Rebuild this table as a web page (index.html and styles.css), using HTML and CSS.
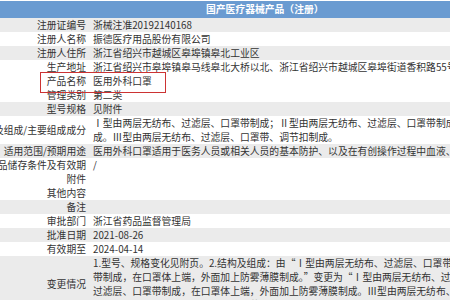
FILE: index.html
```html
<!DOCTYPE html>
<html lang="zh-CN">
<head>
<meta charset="utf-8">
<title>国产医疗器械产品（注册）</title>
<link rel="stylesheet" href="styles.css">
</head>
<body>
<div class="sheet">
  <div class="head">国产医疗器械产品（注册）</div>
  <div class="row gray"><div class="lab"><span>注册证编号</span></div><div class="val">浙械注准20192140168</div></div>
  <div class="row"><div class="lab"><span>注册人名称</span></div><div class="val">振德医疗用品股份有限公司</div></div>
  <div class="row gray"><div class="lab"><span>注册人住所</span></div><div class="val">浙江省绍兴市越城区皋埠镇皋北工业区</div></div>
  <div class="row"><div class="lab"><span>生产地址</span></div><div class="val">浙江省绍兴市皋埠镇皋马线皋北大桥以北、浙江省绍兴市越城区皋埠街道香积路55号</div></div>
  <div class="row"><div class="lab"><span>产品名称</span></div><div class="val">医用外科口罩</div></div>
  <div class="row"><div class="lab"><span>管理类别</span></div><div class="val">第二类</div></div>
  <div class="row gray"><div class="lab"><span>型号规格</span></div><div class="val">见附件</div></div>
  <div class="row"><div class="lab"><span>结构及组成/主要组成成分</span></div><div class="val">Ⅰ型由两层无纺布、过滤层、口罩带制成；Ⅱ型由两层无纺布、过滤层、口罩带制成，在口罩体上端，外面加上防雾薄膜制<br>成。Ⅲ型由两层无纺布、过滤层、口罩带、调节扣制成。</div></div>
  <div class="row gray"><div class="lab"><span>适用范围/预期用途</span></div><div class="val">医用外科口罩适用于医务人员或相关人员的基本防护、以及在有创操作过程中血液、体液和飞溅物传播的防护。</div></div>
  <div class="row"><div class="lab"><span>产品储存条件及有效期</span></div><div class="val">/</div></div>
  <div class="row"><div class="lab"><span>附件</span></div><div class="val"></div></div>
  <div class="row"><div class="lab"><span>其他内容</span></div><div class="val"></div></div>
  <div class="row gray"><div class="lab"><span>备注</span></div><div class="val"></div></div>
  <div class="row"><div class="lab"><span>审批部门</span></div><div class="val">浙江省药品监督管理局</div></div>
  <div class="row gray"><div class="lab"><span>批准日期</span></div><div class="val">2021-08-26</div></div>
  <div class="row"><div class="lab"><span>有效期至</span></div><div class="val">2024-04-14</div></div>
  <div class="row gray"><div class="lab"><span>变更情况</span></div><div class="val">1.型号、规格变化见附页。2.结构及组成：由“Ⅰ型由两层无纺布、过滤层、口罩带制成，在口罩体上端，外面<br>带制成，在口罩体上端，外面加上防雾薄膜制成。”变更为“Ⅰ型由两层无纺布、过滤层、口罩带制成，在口罩<br>过滤层、口罩带制成，在口罩体上端，外面加上防雾薄膜制成。Ⅲ型由两层无纺布、过滤层、口罩带、调节扣<br>制成，在口罩体上端，外面加上防雾薄膜制成。”</div></div>
</div>
<div class="mark"></div>
</body>
</html>
```
FILE: styles.css
```css
html, body {
  margin: 0;
  padding: 0;
  background: #ffffff;
  overflow: hidden;
  width: 450px;
  height: 300px;
}
body {
  padding-top: 1px;
  position: relative;
  font-family: "Noto Sans CJK SC", "Noto Sans", sans-serif;
  font-size: 9.8px;
  color: #333333;
}
.sheet {
  display: flex;
  flex-direction: column;
}
.head {
  height: 17px;
  line-height: 17px;
  background: #6a9bd1;
  color: #ffffff;
  font-weight: bold;
  padding-left: 206px;
  white-space: nowrap;
}
.row {
  display: grid;
  grid-template-columns: 89px 1fr;
  align-items: center;
  line-height: 14px;
  min-height: 14px;
}
.row.gray {
  background: #ebebeb;
}
.lab {
  display: flex;
  justify-content: flex-end;
  padding-right: 3px;
  white-space: nowrap;
  min-width: 0;
}
.lab span {
  flex: none;
}
.val {
  padding-left: 4px;
  white-space: nowrap;
  min-width: 0;
}
.mark {
  position: absolute;
  left: 40px;
  top: 72px;
  width: 124px;
  height: 19px;
  border: 1.5px solid #cc3333;
}
```
